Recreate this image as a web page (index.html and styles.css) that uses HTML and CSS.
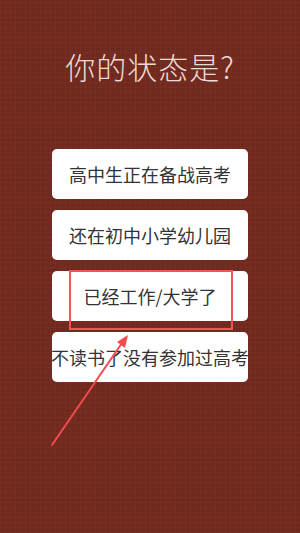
FILE: index.html
```html
<!DOCTYPE html>
<html lang="zh-CN">
<head>
    <meta charset="UTF-8">
    <meta name="viewport" content="width=device-width, initial-scale=1.0">
    <title>你的状态是?</title>
    <link rel="stylesheet" href="styles.css">
</head>
<body>
    <div class="page">
        <h1 class="title">你的状态是?</h1>
        <div class="choices">
            <button class="choice">高中生正在备战高考</button>
            <button class="choice">还在初中小学幼儿园</button>
            <button class="choice">已经工作/大学了</button>
            <button class="choice">不读书了没有参加过高考</button>
        </div>

        <!-- annotation over the third choice -->
        <div class="mark-box"></div>
        <svg class="mark-arrow" width="300" height="533" viewBox="0 0 300 533">
            <line x1="52" y1="445" x2="122" y2="343" stroke="#f04c4c" stroke-width="2" stroke-linecap="round"/>
            <polygon points="128,335 125,348 117,342" fill="#f04c4c"/>
        </svg>
    </div>
</body>
</html>
```

FILE: styles.css
```css
html, body {
    margin: 0;
    padding: 0;
}
body {
    font-family: "Noto Sans CJK SC", "Noto Sans", sans-serif;
    background-color: #6f2a1f;
    background-image:
        repeating-linear-gradient(0deg, rgba(140,50,40,0.35) 0 1px, transparent 1px 5px),
        repeating-linear-gradient(90deg, rgba(140,50,40,0.35) 0 1px, transparent 1px 5px);
    width: 300px;
    height: 533px;
    overflow: hidden;
}
.page {
    position: relative;
    width: 300px;
    height: 533px;
}
.title {
    margin: 0;
    padding-top: 46px;
    height: 40px;
    line-height: 40px;
    font-size: 30px;
    font-weight: 300;
    letter-spacing: 1px;
    color: #eedad5;
    text-align: center;
}
.choices {
    width: 196px;
    margin: 63px auto 0;
    display: flex;
    flex-direction: column;
    gap: 11px;
}
.choice {
    height: 50px;
    padding: 0;
    border: none;
    border-radius: 5px;
    background: #fff;
    color: #333;
    font-family: inherit;
    font-size: 18px;
    white-space: nowrap;
    display: flex;
    align-items: center;
    justify-content: center;
    overflow: visible;
}
.mark-box {
    position: absolute;
    left: 69px;
    top: 270px;
    width: 160px;
    height: 56px;
    border: 2px solid #f25555;
}
.mark-arrow {
    position: absolute;
    left: 0;
    top: 0;
}
```
